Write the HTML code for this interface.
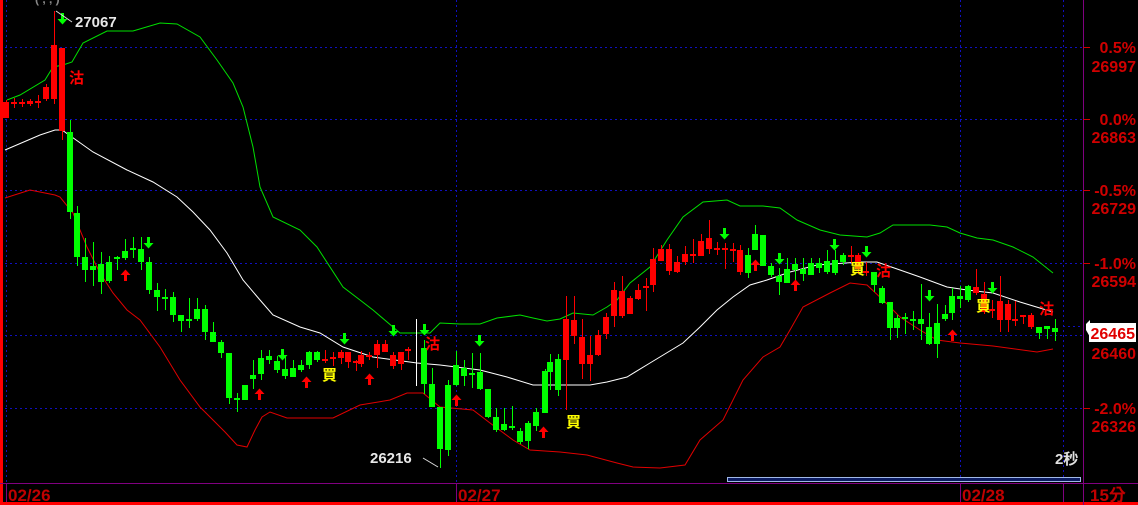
<!DOCTYPE html>
<html><head><meta charset="utf-8"><style>
html,body{margin:0;padding:0;background:#000;width:1138px;height:505px;overflow:hidden}
svg{display:block}
text{font-family:"Liberation Sans","Noto Sans CJK TC",sans-serif;font-weight:bold}
</style></head><body>
<svg id="c" width="1138" height="505" xmlns="http://www.w3.org/2000/svg">
<rect width="1138" height="505" fill="#000"/>
<g stroke="#1010c0" stroke-width="1" stroke-dasharray="2,3">
<line x1="0" y1="47.5" x2="1083" y2="47.5"/><line x1="0" y1="119.5" x2="1083" y2="119.5"/>
<line x1="0" y1="190.5" x2="1083" y2="190.5"/><line x1="0" y1="263.5" x2="1083" y2="263.5"/>
<line x1="0" y1="335.5" x2="1083" y2="335.5"/><line x1="0" y1="408.5" x2="1083" y2="408.5"/>
<line x1="6.5" y1="0" x2="6.5" y2="483"/><line x1="456.5" y1="0" x2="456.5" y2="483"/>
<line x1="960.5" y1="0" x2="960.5" y2="483"/><line x1="1063.5" y1="0" x2="1063.5" y2="483"/>
</g>
<g id="bands" fill="none" stroke-width="1"></g>
<g id="candles"></g>
<g id="marks"></g>
<rect x="0" y="0" width="3" height="505" fill="#f00"/>
<rect x="0" y="502" width="1138" height="3" fill="#f00"/>
<line x1="0" y1="483.5" x2="1138" y2="483.5" stroke="#800080"/>
<line x1="1083.5" y1="0" x2="1083.5" y2="505" stroke="#800080"/>
<line x1="6.5" y1="483" x2="6.5" y2="502" stroke="#800080"/>
<line x1="456.5" y1="483" x2="456.5" y2="502" stroke="#800080"/>
<line x1="960.5" y1="483" x2="960.5" y2="502" stroke="#800080"/>
<line x1="1063.5" y1="483" x2="1063.5" y2="502" stroke="#800080"/>
<g fill="#c00000" font-size="17">
<text x="8" y="501">02/26</text><text x="458" y="501">02/27</text><text x="962" y="501">02/28</text>
<text x="1090" y="501">15分</text>
</g>
<g fill="#d00000" font-size="16" text-anchor="end">
<text x="1136" y="53">0.5%</text><text x="1136" y="72">26997</text>
<text x="1136" y="125">0.0%</text><text x="1136" y="143">26863</text>
<text x="1136" y="196">-0.5%</text><text x="1136" y="214">26729</text>
<text x="1136" y="269">-1.0%</text><text x="1136" y="287">26594</text>
<text x="1136" y="359">26460</text>
<text x="1136" y="414">-2.0%</text><text x="1136" y="432">26326</text>
</g>
<g stroke="#d00000"><line x1="1083" y1="47.5" x2="1090" y2="47.5"/><line x1="1083" y1="119.5" x2="1090" y2="119.5"/><line x1="1083" y1="190.5" x2="1090" y2="190.5"/><line x1="1083" y1="263.5" x2="1090" y2="263.5"/><line x1="1083" y1="408.5" x2="1090" y2="408.5"/></g>
<line x1="1063" y1="326.5" x2="1083" y2="326.5" stroke="#1010c0" stroke-dasharray="2,3"/>
<polygon points="1086,324 1090,320 1090,337 1086,330" fill="#fff"/>
<rect x="1089" y="323" width="47" height="19" fill="#fff"/>
<text x="1135" y="339" fill="#e00000" font-size="16" text-anchor="end">26465</text>
<text x="1055" y="464" fill="#e0e0e0" font-size="15">2秒</text>
<rect x="727.5" y="477.5" width="353" height="4" fill="#0a1a60" stroke="#a0b8e8"/>
<text x="75" y="27" fill="#e8e8e8" font-size="15">27067</text>
<line x1="56" y1="11" x2="72" y2="22" stroke="#ddd"/>
<text x="370" y="463" fill="#e8e8e8" font-size="15">26216</text>
<line x1="423" y1="458" x2="438" y2="467" stroke="#ddd"/>
<text x="35" y="3" fill="#888" font-size="12">( , , )</text>
<line x1="416.5" y1="319" x2="416.5" y2="386" stroke="#fff"/>
</svg>
<script>
var NS="http://www.w3.org/2000/svg";
function el(p,t,a){var e=document.createElementNS(NS,t);for(var k in a)e.setAttribute(k,a[k]);document.getElementById(p).appendChild(e);return e;}
function line(id,pts,col){el('bands','polyline',{points:pts,stroke:col});}
line('g',"7,100 20,95 45,80 53,67 63,65 72,62 83,43 107,31 133,31 160,23 177,24 200,37 217,60 233,83 243,107 253,147 260,187 273,217 300,230 317,247 343,287 360,300 373,310 400,333 430,333 440,323 460,324 480,324 497,318 520,315 533,318 547,321 560,319 573,313 593,315 607,307 617,300 630,283 650,267 667,240 683,217 703,202 727,200 740,206 763,206 780,208 797,220 820,230 840,235 867,237 880,233 893,225 930,225 947,227 960,233 977,238 993,240 1013,247 1033,257 1053,273","#00e000");
line('w',"5,150 40,135 55,130 62,130 93,152 127,170 153,182 177,197 193,212 210,230 227,253 243,280 260,300 273,315 300,327 320,333 343,347 373,357 417,363 440,365 480,370 507,377 533,385 567,385 590,385 607,382 627,377 650,363 683,343 700,327 717,310 733,297 750,285 767,280 790,272 817,265 860,262 877,262 900,270 920,277 947,287 967,290 993,293 1020,302 1053,312","#fff");
line('r',"5,198 30,190 55,195 60,197 73,213 87,247 100,273 113,293 127,310 140,320 160,347 180,380 200,407 213,420 225,432 237,445 247,447 255,430 262,417 270,412 287,418 333,418 360,405 390,400 407,393 423,393 440,407 473,410 490,423 513,440 530,450 560,452 587,455 617,463 633,467 660,468 685,465 700,440 723,420 743,380 763,357 780,347 790,330 803,307 830,293 850,283 867,285 883,300 900,317 920,330 937,340 960,343 993,346 1037,352 1053,349","#e00000");
var R='#ff0000',G='#00ff00';
var C=[
[6,102,118,100,118,R],[14,102,104,98,108,R],[22,102,104,99,107,R],[30,101,104,99,106,R],[38,101,103,95,108,R],[46,87,99,84,101,R],[54,45,99,11,104,R],[62,48,131,48,140,R],
[70,132,212,120,219,G],[77,213,257,206,266,G],[85,257,270,238,282,G],[93,266,270,242,286,G],[101,264,282,252,294,G],[109,262,281,256,283,G],[117,257,259,256,270,G],[125,251,258,239,260,G],[133,248,250,237,258,G],[141,249,262,237,270,G],[149,262,290,257,294,G],[157,290,297,283,311,G],[165,297,298,289,310,G],[173,297,315,292,322,G],[181,315,321,315,332,G],[189,319,321,298,328,G],[197,309,319,298,321,G],[205,309,332,305,340,G],[213,332,342,322,342,G],[221,342,353,340,358,G],[229,353,398,353,404,G],[237,398,400,393,412,G],[245,385,400,385,400,G],[253,375,379,360,389,G],[261,358,374,350,380,G],[269,356,360,350,364,G],[277,361,370,356,373,G],[285,369,376,355,379,G],[293,368,377,360,377,G],[301,365,370,360,372,G],[309,352,365,351,369,G],[317,352,360,351,362,G],
[325,359,361,350,363,R],[333,357,359,352,366,R],[341,352,358,350,364,R],[348,352,362,352,368,R],[356,361,363,360,371,R],[361,355,364,351,367,R],[369,355,357,352,360,R],[377,344,355,340,368,R],[385,344,352,340,352,R],[393,355,366,352,369,R],[401,352,364,352,370,R],[408,349,351,347,360,R],
[424,348,384,340,394,G],[432,384,407,368,407,G],[440,407,449,407,468,G],[448,385,450,380,456,G],[456,365,385,351,386,G],[464,368,376,360,386,G],[472,373,375,353,388,G],[480,372,389,353,390,G],[488,389,417,389,418,G],[496,417,430,408,432,G],[504,424,430,408,431,G],[512,426,428,406,430,G],[520,431,442,428,444,G],[528,423,441,421,449,G],[536,412,426,408,431,G],[545,371,413,369,413,G],[550,362,372,354,390,G],[558,359,390,354,396,G],
[566,319,360,296,410,R],[574,320,336,296,344,R],[582,337,364,319,379,R],[590,355,364,336,381,R],[598,335,355,330,356,R],[606,317,334,313,339,R],[614,290,316,282,327,R],[622,291,316,276,318,R],[630,298,314,296,314,R],[638,290,299,284,300,R],[646,286,288,278,311,R],[653,259,285,248,292,R],[661,249,261,245,261,R],[669,249,271,244,275,R],[677,262,272,256,273,R],[685,254,262,246,265,R],[693,254,256,239,263,R],[701,241,256,234,256,R],[709,238,249,220,254,R],[717,248,250,242,255,R],[725,248,250,243,269,R],[733,249,251,243,262,R],[740,250,272,245,275,R],
[748,255,273,248,278,G],[755,234,250,225,250,G],[763,235,266,235,266,G],[771,266,275,263,277,G],[779,276,282,268,295,G],[787,269,283,258,283,G],[795,264,270,258,281,G],[803,269,274,258,281,G],[811,263,275,258,275,G],[819,263,268,258,273,G],[827,261,272,250,274,G],[835,260,273,250,275,G],[843,255,262,253,265,G],
[851,255,257,246,263,R],[858,255,269,253,274,R],[866,271,273,262,276,R],
[874,272,285,272,292,G],[882,288,303,286,304,G],[890,302,328,302,340,G],[897,318,328,315,338,G],[905,317,319,313,334,G],[913,319,321,311,330,G],[921,319,324,284,340,G],[929,327,344,313,345,G],[937,323,344,304,358,G],[945,314,319,305,321,G],[952,296,313,288,320,G],[960,296,299,286,308,G],[968,286,300,285,302,G],
[976,287,293,269,295,R],[984,294,312,282,314,R],[992,309,311,300,318,R],[1000,301,320,276,332,R],[1008,304,320,300,332,R],[1015,319,321,301,326,R],[1023,315,317,316,324,R],[1031,315,327,313,329,R],
[1039,327,333,327,339,G],[1047,326,329,326,339,G],[1055,328,332,319,341,G]];
C.forEach(function(c){var x=c[0];el('candles','rect',{x:x,y:c[3],width:1,height:c[4]-c[3],fill:c[5]});var h=Math.max(2,c[2]-c[1]);el('candles','rect',{x:x-3,y:c[1],width:6,height:h,fill:c[5]});});
function dn(x,y){el('marks','path',{d:'M'+(x-1)+' '+(y-7)+'h3v6h3.5l-5,5.5l-5,-5.5h3.5z',fill:'#00ff00'});}
function up(x,y){el('marks','path',{d:'M'+(x-1)+' '+(y+7)+'h3v-6h3.5l-5,-5.5l-5,5.5h3.5z',fill:'#ff0000'});}
[[62,20],[148,244],[282,356],[344,340],[393,332],[424,331],[479,342],[724,235],[779,260],[834,246],[866,253],[929,297],[992,289]].forEach(function(p){dn(p[0],p[1]);});
[[125,274],[259,393],[306,381],[369,378],[456,399],[543,431],[755,264],[795,284],[952,334]].forEach(function(p){up(p[0],p[1]);});
function tx(x,y,s,col){var t=el('marks','text',{x:x-8,y:y+6,fill:col,'font-size':'15'});t.textContent=s;}
[[330,374],[574,421],[858,268],[984,305]].forEach(function(p){tx(p[0],p[1],'買','#ffff00');});
[[77,77],[433,343],[884,270],[1047,308]].forEach(function(p){tx(p[0],p[1],'沽','#ff0000');});
</script>
</body></html>
